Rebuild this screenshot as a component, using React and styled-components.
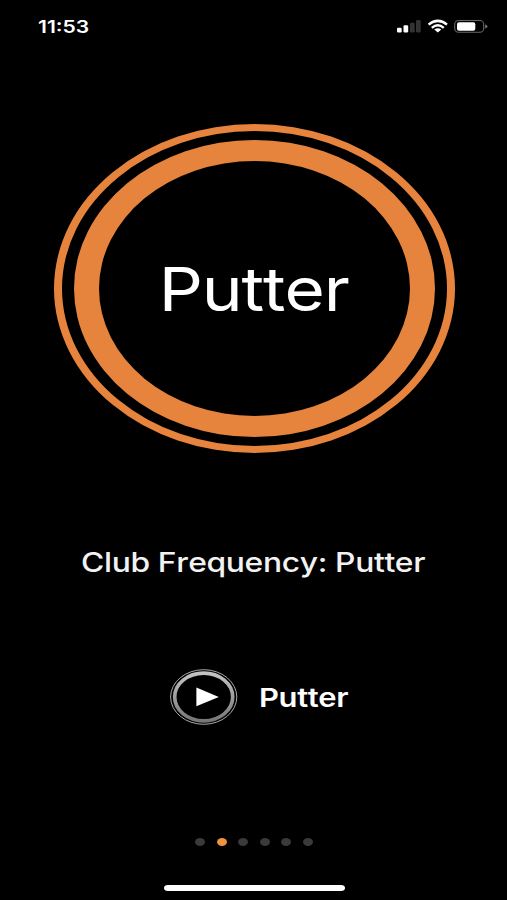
import React, { useState } from "react";
import styled, { createGlobalStyle } from "styled-components";

const GlobalStyle = createGlobalStyle`
  body {
    margin: 0;
    background: #000;
  }
`;

const Screen = styled.main`
  display: flex;
  flex-direction: column;
  align-items: center;
  box-sizing: border-box;
  width: 507px;
  height: 900px;
  overflow: hidden;
  background: #000;
  color: #fff;
  font-family: Inter, "Liberation Sans", sans-serif;
`;

const StatusBar = styled.header`
  display: flex;
  align-items: center;
  justify-content: space-between;
  box-sizing: border-box;
  width: 100%;
  height: 52px;
  padding: 0 19px 0 38px;
`;

// Wide lettering, stretched from the left or the centre
const Label = styled.span`
  display: block;
  flex: none;
  margin-top: ${(props) => props.$drop || 0}px;
  font-size: ${(props) => props.$size}px;
  font-weight: ${(props) => props.$weight || 400};
  font-kerning: none;
  line-height: 1;
  letter-spacing: ${(props) => props.$spacing || 0}px;
  color: ${(props) => props.$color || "#fff"};
  white-space: nowrap;
  transform: scaleX(${(props) => props.$stretch || 1});
  transform-origin: ${(props) => props.$origin || "center"};
`;

const OuterRing = styled.div`
  display: flex;
  box-sizing: border-box;
  width: 401px;
  height: 329px;
  margin: 71.5px 0 0 1px;
  padding: 9px 12px;
  border: solid #e6833d;
  border-width: 7px 8px;
  border-radius: 50%;
`;

const InnerRing = styled.div`
  display: flex;
  align-items: center;
  justify-content: center;
  flex: 1;
  border: solid #e6833d;
  border-width: 21px 25px;
  border-radius: 50%;
`;

const Heading = styled.h1`
  display: flex;
  align-items: center;
  height: 40px;
  margin: 89.5px 0 0;
  font-weight: 500;
`;

const PlayRow = styled.div`
  display: flex;
  align-items: center;
  gap: 21.5px;
  box-sizing: border-box;
  width: 100%;
  height: 56px;
  margin-top: 87px;
  padding-left: 169.5px;
`;

const PlayButton = styled.button`
  display: block;
  width: 68px;
  height: 56px;
  padding: 0;
  border: 0;
  background: none;
  cursor: pointer;
`;

const Pager = styled.nav`
  display: flex;
  gap: 11.6px;
  margin: 113px 0 0 1px;
`;

const Dot = styled.button`
  width: 10px;
  height: 8px;
  padding: 0;
  border: 0;
  border-radius: 50%;
  background: ${(props) => (props.$active ? "#f0923f" : "#3a3a3a")};
`;

const HomeIndicator = styled.div`
  width: 181px;
  height: 6px;
  margin: 39px 0 0 1px;
  border-radius: 4px / 3px;
  background: #fff;
`;

function StatusIcons() {
  return (
    <svg width="92" height="16" viewBox="396 18 92 16">
      <rect x="397" y="27.8" width="4.7" height="4.7" rx="1.2" fill="#fff" />
      <rect x="403.5" y="25.2" width="4.7" height="7.3" rx="1.2" fill="#fff" />
      <rect x="410" y="22.8" width="4.7" height="9.7" rx="1.2" fill="#333" />
      <rect x="416" y="20" width="4.7" height="12.5" rx="1.2" fill="#333" />
      <g fill="none" stroke="#fff">
        <path d="M428.6 24.6Q437.8 17.1 447 24.6" strokeWidth="2.5" />
        <path d="M431.8 27.8Q437.8 22.8 443.8 27.8" strokeWidth="2.3" />
      </g>
      <path d="M434.3 29.6Q437.8 27 441.3 29.6L437.8 32.6Z" fill="#fff" />
      <rect
        x="454.7"
        y="20.5"
        width="29"
        height="11.8"
        rx="3.8"
        fill="none"
        stroke="#666"
        strokeWidth="1.1"
      />
      <rect x="457" y="22.2" width="18.3" height="8.5" rx="2" fill="#fff" />
      <path d="M485.2 24.5Q487.4 25.2 487.4 26.5T485.2 28.5Z" fill="#777" />
    </svg>
  );
}

function PlayIcon() {
  return (
    <svg width="68" height="56" viewBox="0 0 68 56">
      <defs>
        <linearGradient id="rim" x1="0" y1="0" x2="0" y2="1">
          <stop offset="0" stopColor="#c4c4c4" />
          <stop offset="1" stopColor="#777" />
        </linearGradient>
      </defs>
      <ellipse
        cx="33.7"
        cy="28"
        rx="33.1"
        ry="27.3"
        fill="none"
        stroke="#aaa"
        strokeWidth="1"
      />
      <ellipse
        cx="33.7"
        cy="28"
        rx="29"
        ry="23.8"
        fill="none"
        stroke="url(#rim)"
        strokeWidth="3.7"
      />
      <path d="M26.4 18.4L48.8 27.9L26.4 37.3Z" fill="#fff" />
    </svg>
  );
}

function App() {
  const [page, setPage] = useState(1);

  return (
    <>
      <GlobalStyle />
      <Screen>
        <StatusBar>
          <Label
            $size={17}
            $weight={600}
            $stretch={1.24}
            $origin="left"
            $drop={3}
          >
            11:53
          </Label>
          <StatusIcons />
        </StatusBar>
        <OuterRing>
          <InnerRing>
            <Label $size={61} $spacing={-1} $stretch={1.135} $drop={2}>
              Putter
            </Label>
          </InnerRing>
        </OuterRing>
        <Heading>
          <Label
            $size={27}
            $weight={500}
            $spacing={-0.3}
            $stretch={1.178}
            $color="#f2f2f2"
          >
            Club Frequency: Putter
          </Label>
        </Heading>
        <PlayRow>
          <PlayButton aria-label="Play">
            <PlayIcon />
          </PlayButton>
          <Label
            $size={26}
            $weight={600}
            $spacing={-0.3}
            $stretch={1.19}
            $origin="left"
            $drop={2}
          >
            Putter
          </Label>
        </PlayRow>
        <Pager>
          {[0, 1, 2, 3, 4, 5].map((i) => (
            <Dot
              key={i}
              $active={i === page}
              aria-label={`Page ${i + 1}`}
              onClick={() => setPage(i)}
            />
          ))}
        </Pager>
        <HomeIndicator />
      </Screen>
    </>
  );
}

export default App;
